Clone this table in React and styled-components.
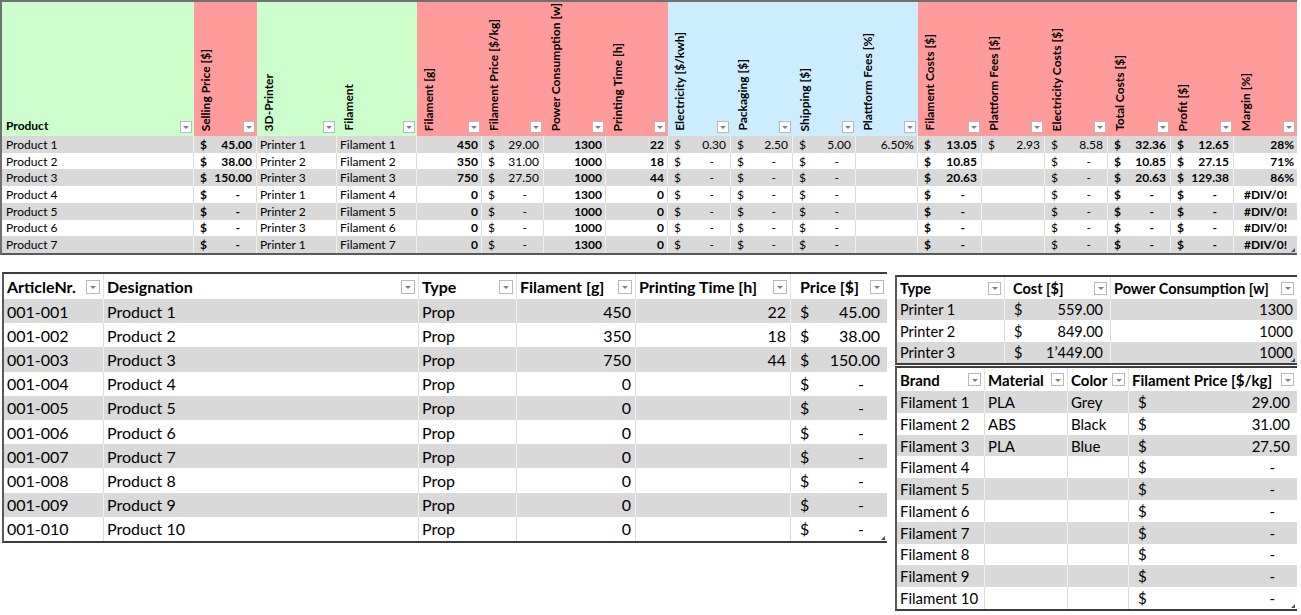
import React from 'react';
import styled, { createGlobalStyle } from 'styled-components';

const GREEN = '#ccffcc';
const PINK = '#ff9b9b';
const BLUE = '#ccecff';
const STRIPE = '#d9d9d9';

const GlobalStyle = createGlobalStyle`
  html, body {
    margin: 0;
    background: #fff;
  }
  body {
    font-family: Lato, "Liberation Sans", sans-serif;
    color: #000;
  }
  * {
    box-sizing: border-box;
  }
`;

const Page = styled.div`
  display: flex;
  flex-direction: column;
  width: 1301px;
`;

/* ---------- shared bits ---------- */

const FilterButton = styled.span`
  flex-shrink: 0;
  width: ${(p) => p.$size}px;
  height: ${(p) => p.$size}px;
  border: 1px solid #b9b9b9;
  background: #fff;
  display: flex;
  align-items: center;
  justify-content: center;
  &::after {
    content: '';
    border-left: 3px solid transparent;
    border-right: 3px solid transparent;
    border-top: 3px solid #808080;
    margin-top: 1px;
  }
`;

const ResizeHandle = styled.span`
  position: absolute;
  right: 2px;
  bottom: 1px;
  width: 0;
  height: 0;
  border-left: 4px solid transparent;
  border-bottom: 4px solid #3d4f8a;
`;

const Dollar = styled.span``;

const Amount = styled.span`
  padding-right: ${(p) => (p.$dash ? '1em' : '0')};
`;

const sepColor = (alt) => (alt ? '#f0f0f0' : '#dcdcdc');

/* ---------- top calculation table ---------- */

const TopFrame = styled.div`
  position: relative;
  width: 1297px;
  border-top: 2px solid #707070;
  border-left: 2px solid #707070;
  border-bottom: 2px solid #5a5a5a;
  font-size: 12px;
`;

const TopHead = styled.div`
  display: grid;
  grid-template-columns: ${(p) => p.$cols};
  height: 134px;
`;

const TopHeadCell = styled.div`
  display: flex;
  align-items: flex-end;
  justify-content: space-between;
  background: ${(p) => p.$bg};
  padding: 0 2px 3px 5px;
  font-weight: 700;
`;

const FlatLabel = styled.span`
  line-height: 13px;
  margin-left: -1px;
  margin-bottom: 1px;
`;

const TurnedLabel = styled.span`
  writing-mode: vertical-rl;
  transform: rotate(180deg);
  white-space: nowrap;
  line-height: 13px;
  margin-bottom: 2px;
`;

const TopRow = styled.div`
  display: grid;
  grid-template-columns: ${(p) => p.$cols};
  height: 16.72px;
  background: ${(p) => (p.$alt ? STRIPE : '#fff')};
`;

const TopCell = styled.div`
  display: flex;
  align-items: center;
  justify-content: ${(p) => p.$justify};
  padding: 0 ${(p) => p.$padR}px 0 ${(p) => p.$padL}px;
  font-weight: ${(p) => (p.$bold ? 700 : 400)};
  white-space: nowrap;
  overflow: hidden;
  border-right: 1px solid ${(p) => sepColor(p.$alt)};
  &:last-child {
    border-right: none;
  }
`;

/* ---------- lower lookup tables ---------- */

const Lower = styled.div`
  display: flex;
  align-items: flex-start;
  gap: 8px;
  margin-top: 17px;
  padding-left: 2px;
`;

const SideColumn = styled.div`
  display: flex;
  flex-direction: column;
  gap: 1px;
  margin-top: 3px;
`;

const ListFrame = styled.div`
  position: relative;
  width: ${(p) => p.$w}px;
  border-top: 2px solid #3c3c3c;
  border-left: 2px solid #5a5a5a;
  border-bottom: 2px solid #3c3c3c;
  font-size: ${(p) => p.$fs}px;
`;

const ListRow = styled.div`
  display: grid;
  grid-template-columns: ${(p) => p.$cols};
  height: ${(p) => p.$h}px;
  background: ${(p) => (p.$alt ? STRIPE : '#fff')};
`;

const ListHeadCell = styled.div`
  display: flex;
  align-items: center;
  justify-content: space-between;
  gap: 2px;
  padding: 0 3px 0 ${(p) => p.$indent}px;
  font-weight: 700;
  white-space: nowrap;
  border-right: 1px solid #e2e2e2;
  &:last-child {
    border-right: none;
  }
`;

const ListCell = styled.div`
  display: flex;
  align-items: center;
  justify-content: ${(p) => p.$justify};
  padding: 0 ${(p) => p.$padR}px 0 ${(p) => p.$padL}px;
  white-space: nowrap;
  overflow: hidden;
  border-right: 1px solid ${(p) => sepColor(p.$alt)};
  &:last-child {
    border-right: none;
  }
`;

/* ---------- data ---------- */

const topCols = [
  { label: 'Product', w: 192, bg: GREEN, flat: true },
  { label: 'Selling Price [$]', w: 63, bg: PINK, type: 'cur', bold: true },
  { label: '3D-Printer', w: 80, bg: GREEN },
  { label: 'Filament', w: 80, bg: GREEN },
  { label: 'Filament [g]', w: 65, bg: PINK, type: 'num', bold: true },
  { label: 'Filament Price [$/kg]', w: 62, bg: PINK, type: 'cur' },
  { label: 'Power Consumption [w]', w: 62, bg: PINK, type: 'num', bold: true },
  { label: 'Printing Time [h]', w: 62, bg: PINK, type: 'num', bold: true },
  { label: 'Electricity [$/kwh]', w: 63, bg: BLUE, type: 'cur' },
  { label: 'Packaging [$]', w: 62, bg: BLUE, type: 'cur' },
  { label: 'Shipping [$]', w: 63, bg: BLUE, type: 'cur' },
  { label: 'Plattform Fees [%]', w: 62, bg: BLUE, type: 'num' },
  { label: 'Filament Costs [$]', w: 64, bg: PINK, type: 'cur', bold: true },
  { label: 'Plattform Fees [$]', w: 63, bg: PINK, type: 'cur' },
  { label: 'Electricity Costs [$]', w: 63, bg: PINK, type: 'cur' },
  { label: 'Total Costs [$]', w: 63, bg: PINK, type: 'cur', bold: true },
  { label: 'Profit [$]', w: 63, bg: PINK, type: 'cur', bold: true },
  { label: 'Margin [%]', w: 63, bg: PINK, type: 'num', bold: true },
];

const emptyTail = ['-', '-', '-', '', '-', '', '-', '-', '-', '#DIV/0!'];

const topRows = [
  ['Product 1', '45.00', 'Printer 1', 'Filament 1', '450', '29.00', '1300', '22', '0.30', '2.50', '5.00', '6.50%', '13.05', '2.93', '8.58', '32.36', '12.65', '28%'],
  ['Product 2', '38.00', 'Printer 2', 'Filament 2', '350', '31.00', '1000', '18', '-', '-', '-', '', '10.85', '', '-', '10.85', '27.15', '71%'],
  ['Product 3', '150.00', 'Printer 3', 'Filament 3', '750', '27.50', '1000', '44', '-', '-', '-', '', '20.63', '', '-', '20.63', '129.38', '86%'],
  ['Product 4', '-', 'Printer 1', 'Filament 4', '0', '-', '1300', '0', ...emptyTail],
  ['Product 5', '-', 'Printer 2', 'Filament 5', '0', '-', '1000', '0', ...emptyTail],
  ['Product 6', '-', 'Printer 3', 'Filament 6', '0', '-', '1000', '0', ...emptyTail],
  ['Product 7', '-', 'Printer 1', 'Filament 7', '0', '-', '1300', '0', ...emptyTail],
];

const productCols = [
  { label: 'ArticleNr.', w: 100 },
  { label: 'Designation', w: 315 },
  { label: 'Type', w: 98 },
  { label: 'Filament [g]', w: 119, type: 'num' },
  { label: 'Printing Time [h]', w: 155, type: 'num' },
  { label: 'Price [$]', w: 96, type: 'cur', indent: 9 },
];

const pricedProducts = [
  ['450', '22', '45.00'],
  ['350', '18', '38.00'],
  ['750', '44', '150.00'],
];

const productRows = Array.from({ length: 10 }, (_, i) => {
  const n = i + 1;
  const [grams, hours, price] = pricedProducts[i] || ['0', '', '-'];
  return [`001-${String(n).padStart(3, '0')}`, `Product ${n}`, 'Prop', grams, hours, price];
});

const printerCols = [
  { label: 'Type', w: 108 },
  { label: 'Cost [$]', w: 106, type: 'cur', indent: 8 },
  { label: 'Power Consumption [w]', w: 186, type: 'num' },
];

const printerRows = [
  ['Printer 1', '559.00', '1300'],
  ['Printer 2', '849.00', '1000'],
  ['Printer 3', '1’449.00', '1000'],
];

const filamentCols = [
  { label: 'Brand', w: 88 },
  { label: 'Material', w: 83 },
  { label: 'Color', w: 61 },
  { label: 'Filament Price [$/kg]', w: 168, type: 'cur' },
];

const knownFilaments = [
  ['PLA', 'Grey', '29.00'],
  ['ABS', 'Black', '31.00'],
  ['PLA', 'Blue', '27.50'],
];

const filamentRows = Array.from({ length: 10 }, (_, i) => {
  const [material, color, price] = knownFilaments[i] || ['', '', '-'];
  return [`Filament ${i + 1}`, material, color, price];
});

const gridOf = (cols) => cols.map((c) => `${c.w}px`).join(' ');

/* ---------- components ---------- */

const CellContent = ({ type, value }) => {
  if (type === 'cur') {
    if (value === '') return null;
    return (
      <>
        <Dollar>$</Dollar>
        <Amount $dash={value === '-'}>{value}</Amount>
      </>
    );
  }
  return value;
};

const cellLayout = (type, value, cur, pad) => {
  if (type === 'cur') return { justify: 'space-between', padL: cur.l, padR: cur.r };
  if (type === 'num') {
    if (String(value).startsWith('#')) return { justify: 'center', padL: 2, padR: 2 };
    return { justify: 'flex-end', padL: 2, padR: pad };
  }
  return { justify: 'flex-start', padL: pad, padR: 2 };
};

const CalculationTable = () => {
  const cols = gridOf(topCols);
  return (
    <TopFrame>
      <TopHead $cols={cols}>
        {topCols.map((c) => (
          <TopHeadCell key={c.label} $bg={c.bg}>
            {c.flat ? <FlatLabel>{c.label}</FlatLabel> : <TurnedLabel>{c.label}</TurnedLabel>}
            <FilterButton $size={12} />
          </TopHeadCell>
        ))}
      </TopHead>
      {topRows.map((row, r) => (
        <TopRow key={row[0]} $cols={cols} $alt={r % 2 === 0}>
          {row.map((value, i) => {
            const col = topCols[i];
            const lay = cellLayout(col.type, value, { l: 6, r: 4 }, 3);
            return (
              <TopCell
                key={col.label}
                $alt={r % 2 === 0}
                $bold={col.bold}
                $justify={lay.justify}
                $padL={i === 0 ? 4 : lay.padL}
                $padR={lay.padR}
              >
                <CellContent type={col.type} value={value} />
              </TopCell>
            );
          })}
        </TopRow>
      ))}
      <ResizeHandle />
    </TopFrame>
  );
};

const ListTable = ({ columns, rows, fontSize, headHeight, rowHeight, filterSize }) => {
  const cols = gridOf(columns);
  const width = columns.reduce((sum, c) => sum + c.w, 0) + 2;
  return (
    <ListFrame $w={width} $fs={fontSize}>
      <ListRow $cols={cols} $h={headHeight}>
        {columns.map((c) => (
          <ListHeadCell key={c.label} $indent={c.indent || 3}>
            <span>{c.label}</span>
            <FilterButton $size={filterSize} />
          </ListHeadCell>
        ))}
      </ListRow>
      {rows.map((row, r) => (
        <ListRow key={row[0]} $cols={cols} $h={rowHeight} $alt={r % 2 === 0}>
          {row.map((value, i) => {
            const col = columns[i];
            const lay = cellLayout(col.type, value, { l: 9, r: 7 }, 4);
            return (
              <ListCell
                key={col.label}
                $alt={r % 2 === 0}
                $justify={lay.justify}
                $padL={col.type ? lay.padL : 3}
                $padR={lay.padR}
              >
                <CellContent type={col.type} value={value} />
              </ListCell>
            );
          })}
        </ListRow>
      ))}
      <ResizeHandle />
    </ListFrame>
  );
};

const App = () => (
  <Page>
    <GlobalStyle />
    <CalculationTable />
    <Lower>
      <ListTable
        columns={productCols}
        rows={productRows}
        fontSize={16}
        headHeight={25}
        rowHeight={24.2}
        filterSize={14}
      />
      <SideColumn>
        <ListTable
          columns={printerCols}
          rows={printerRows}
          fontSize={14.5}
          headHeight={22}
          rowHeight={21.33}
          filterSize={13}
        />
        <ListTable
          columns={filamentCols}
          rows={filamentRows}
          fontSize={15}
          headHeight={23}
          rowHeight={21.8}
          filterSize={13}
        />
      </SideColumn>
    </Lower>
  </Page>
);

export default App;
